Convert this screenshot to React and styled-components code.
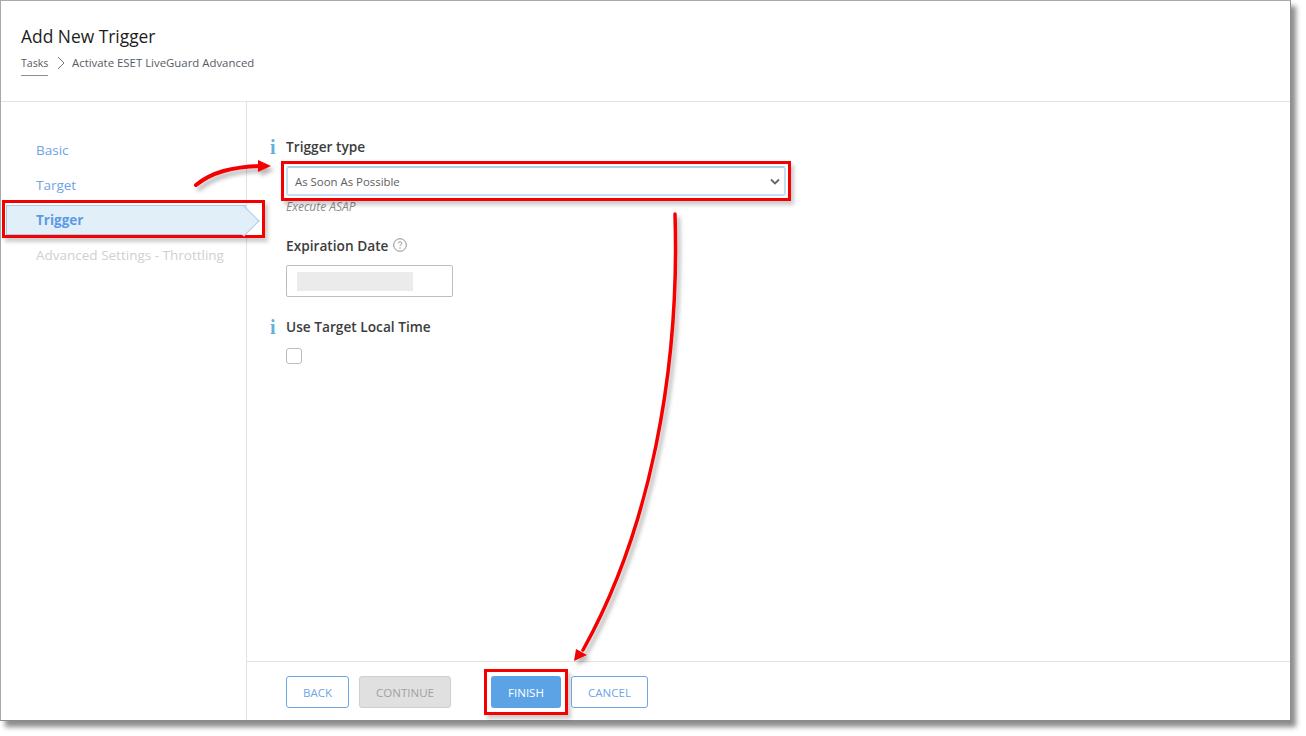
import React from "react";
import styled, { createGlobalStyle, css } from "styled-components";

const Global = createGlobalStyle`
  html, body { margin: 0; padding: 0; background: #fff; }
  body { font-family: "Open Sans", "Noto Sans", sans-serif; width: 1306px; height: 736px; overflow: hidden; }
  * { box-sizing: border-box; }
`;

const Stage = styled.div`
  position: relative;
  width: 1306px;
  height: 736px;
  background: #fff;
`;

const Window = styled.div`
  width: 1291px;
  height: 721px;
  background: #fff;
  border: 1px solid #a9a9a9;
  border-right-color: #8f8f8f;
  border-bottom-color: #8a8a8a;
  box-shadow: 5px 6px 5px rgba(0, 0, 0, 0.45);
  display: flex;
  flex-direction: column;
`;

const Header = styled.header`
  height: 101px;
  flex: none;
  padding: 25px 20px 0;
  border-bottom: 1px solid #e3e3e3;
`;

const Title = styled.h1`
  margin: 0;
  font-size: 17.4px;
  line-height: 21px;
  font-weight: 400;
  color: #1d1d1d;
`;

const Crumbs = styled.nav`
  display: flex;
  align-items: flex-start;
  margin-top: 8px;
  font-size: 11.4px;
  line-height: 16px;
  color: #555c66;
`;

const CrumbLink = styled.span`
  display: block;
  width: 27px;
  font-size: 10.6px;
  padding-bottom: 4px;
  border-bottom: 1px solid #8e8e8e;
`;

const CrumbSep = styled.svg`
  width: 8px;
  height: 14px;
  margin: 1px 7px 0 9px;
  flex: none;
`;

const Body = styled.div`
  flex: 1;
  display: flex;
  min-height: 0;
`;

const Sidebar = styled.aside`
  width: 246px;
  flex: none;
  padding-top: 31px;
  border-right: 1px solid #e3e3e3;
`;

const NavLabel = styled.span`
  position: relative;
  z-index: 1;
  top: -1px;
`;

const NavItem = styled.div`
  position: relative;
  height: 35px;
  padding-left: 35px;
  display: flex;
  align-items: center;
  font-size: 13.5px;
  color: ${(p) => (p.$disabled ? "#d0d0d0" : "#6fa3e6")};
  ${(p) =>
    p.$active &&
    css`
      font-weight: 700;
      color: #5c9ae6;
      &::before {
        content: "";
        position: absolute;
        left: 5px;
        right: 0;
        top: 2px;
        bottom: 3px;
        background: #e1eff9;
        border: 1px solid #a9cde8;
        border-right: 0;
      }
      &::after {
        content: "";
        position: absolute;
        right: -9px;
        top: 7px;
        width: 21px;
        height: 21px;
        background: #e1eff9;
        border-top: 1px solid #a9cde8;
        border-right: 1px solid #a9cde8;
        transform: rotate(45deg);
      }
    `}
`;

const Main = styled.main`
  flex: 1;
  display: flex;
  flex-direction: column;
  min-width: 0;
`;

const Form = styled.section`
  flex: 1;
  padding: 35px 0 0 39px;
`;

const Label = styled.div`
  position: relative;
  display: flex;
  align-items: center;
  gap: 5px;
  height: 20px;
  padding-bottom: 2px;
  margin-top: ${(p) => p.$top || 0}px;
  font-size: 13.7px;
  font-weight: 600;
  color: #3d3d3d;
`;

const Info = styled.span`
  position: absolute;
  left: -16px;
  top: -1px;
  font: 700 20px/22px "Liberation Serif", serif;
  color: #63b0dc;
`;

const SelectBox = styled.div`
  position: relative;
  width: 500px;
  height: 30px;
  margin-top: 9px;
  padding: 1px 4px 0 7px;
  display: flex;
  align-items: center;
  justify-content: space-between;
  border: 2px solid #c6e0ee;
  border-top-color: #b5cfdc;
  border-radius: 3px;
  font-size: 11.4px;
  color: #5e5e5e;
`;

const Highlight = styled.span`
  position: absolute;
  inset: ${(p) => p.$inset};
  border: 3px solid #f50000;
  box-shadow: 3px 4px 4px rgba(0, 0, 0, 0.2);
  pointer-events: none;
`;

const Hint = styled.div`
  margin-top: 3px;
  font-size: 12px;
  line-height: 16px;
  font-style: italic;
  color: #8d8d8d;
`;

const DateField = styled.div`
  width: 167px;
  height: 32px;
  margin-top: 9px;
  padding: 6px 10px;
  border: 1px solid #bdbdbd;
  border-radius: 2px;
`;

const DateMask = styled.div`
  width: 116px;
  height: 19px;
  background: #ebebeb;
`;

const Checkbox = styled.div`
  width: 16px;
  height: 16px;
  margin-top: 11px;
  border: 1px solid #bdbdbd;
  border-radius: 3px;
`;

const Footer = styled.footer`
  height: 59px;
  flex: none;
  padding: 14px 0 0 39px;
  display: flex;
  align-items: flex-start;
  gap: 10px;
  border-top: 1px solid #e3e3e3;
`;

const Button = styled.div`
  position: relative;
  height: 32px;
  width: ${(p) => p.$w}px;
  margin-left: ${(p) => p.$gap || 0}px;
  display: flex;
  align-items: center;
  justify-content: center;
  border-radius: 3px;
  font-size: 11.5px;
  ${(p) =>
    p.$variant === "primary"
      ? css`
          background: #5ca3e6;
          color: #fff;
        `
      : p.$variant === "disabled"
      ? css`
          background: #e0e0e0;
          border: 1px solid #cfcfcf;
          color: #a0a0a0;
        `
      : css`
          background: #fff;
          border: 1px solid #6aa6e2;
          color: #6fa3e6;
        `}
`;

const Arrows = styled.svg`
  position: absolute;
  left: 0;
  top: 0;
  pointer-events: none;
`;

export default function App() {
  return (
    <>
      <Global />
      <Stage>
        <Window>
          <Header>
            <Title>Add New Trigger</Title>
            <Crumbs>
              <CrumbLink>Tasks</CrumbLink>
              <CrumbSep viewBox="0 0 8 14">
                <path d="M1 1l6 6-6 6" fill="none" stroke="#777" strokeWidth="1" />
              </CrumbSep>
              <span>Activate ESET LiveGuard Advanced</span>
            </Crumbs>
          </Header>
          <Body>
            <Sidebar>
              <NavItem><NavLabel>Basic</NavLabel></NavItem>
              <NavItem><NavLabel>Target</NavLabel></NavItem>
              <NavItem $active>
                <NavLabel>Trigger</NavLabel>
                <Highlight $inset="-3px -19px 0px 1px" />
              </NavItem>
              <NavItem $disabled><NavLabel>Advanced Settings - Throttling</NavLabel></NavItem>
            </Sidebar>
            <Main>
              <Form>
                <Label><Info>i</Info>Trigger type</Label>
                <SelectBox>
                  <span>As Soon As Possible</span>
                  <svg width="10" height="7" viewBox="0 0 10 7">
                    <path d="M1 1.5l4 4 4-4" fill="none" stroke="#666" strokeWidth="1.8" />
                  </svg>
                  <Highlight $inset="-7px" />
                </SelectBox>
                <Hint>Execute ASAP</Hint>
                <Label $top={21}>
                  Expiration Date
                  <svg width="14" height="14" viewBox="0 0 14 14">
                    <circle cx="7" cy="7" r="6.3" fill="none" stroke="#8f8f8f" />
                    <path d="M5.2 5.4c.1-1 .8-1.6 1.8-1.6s1.8.6 1.8 1.5c0 1.3-1.8 1.3-1.8 2.7" fill="none" stroke="#8f8f8f" />
                    <circle cx="7" cy="10" r=".7" fill="#8f8f8f" />
                  </svg>
                </Label>
                <DateField><DateMask /></DateField>
                <Label $top={20}><Info>i</Info>Use Target Local Time</Label>
                <Checkbox />
              </Form>
              <Footer>
                <Button $w={63}>BACK</Button>
                <Button $w={92} $variant="disabled">CONTINUE</Button>
                <Button $w={70} $gap={30} $variant="primary">
                  FINISH
                  <Highlight $inset="-7px" />
                </Button>
                <Button $w={77}>CANCEL</Button>
              </Footer>
            </Main>
          </Body>
        </Window>
        <Arrows width="1306" height="736" viewBox="0 0 1306 736">
          <defs>
            <filter id="arrowShadow" x="-20%" y="-20%" width="140%" height="140%">
              <feDropShadow dx="3" dy="4" stdDeviation="2" floodColor="#000" floodOpacity="0.3" />
            </filter>
          </defs>
          <g filter="url(#arrowShadow)">
            <path d="M196 185C212 172 232 167 260 166" fill="none" stroke="#f50000" strokeWidth="4" strokeLinecap="round" />
            <path d="M258 160L271 166L258 172Z" fill="#f50000" />
            <path d="M675 214C680 370 650 530 583 650" fill="none" stroke="#f50000" strokeWidth="3.5" strokeLinecap="round" />
            <path d="M574 661L576 649L587 655Z" fill="#f50000" />
          </g>
        </Arrows>
      </Stage>
    </>
  );
}
